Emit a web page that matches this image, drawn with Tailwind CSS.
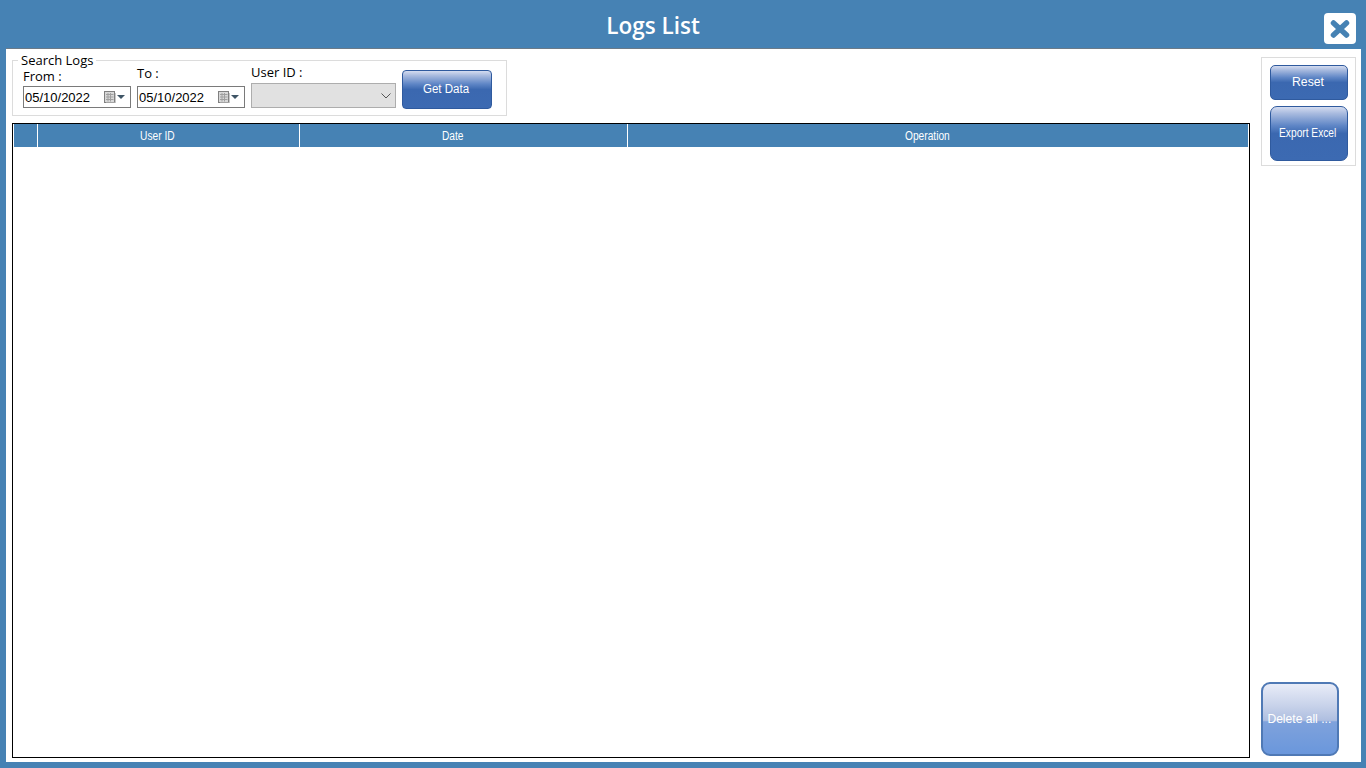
<!DOCTYPE html>
<html>
<head>
<meta charset="utf-8">
<script src="https://cdn.jsdelivr.net/npm/@tailwindcss/browser@4"></script>
</head>
<body class="m-0 w-[1366px] h-[768px] overflow-hidden bg-[#4682b4] font-['Liberation_Sans',sans-serif]">
<div class="flex flex-col h-[768px]">
  <header class="relative h-[49px] shrink-0 flex items-center justify-center">
    <h1 class="ml-[-60px] mt-[3px] text-[22.5px] leading-[32px] font-semibold text-white font-['Open_Sans',sans-serif]">Logs List</h1>
    <button class="absolute left-[1324px] top-[13px] w-[32px] h-[31px] bg-white rounded-[4px] flex items-center justify-center">
      <svg width="20" height="18" viewBox="0 0 20 18"><path d="M3.5 3 L16.5 15 M16.5 3 L3.5 15" stroke="#4682b4" stroke-width="5.5" fill="none" stroke-linecap="round"/></svg>
    </button>
    <div class="absolute left-[6px] top-[48px] w-[1307px] h-[1px] bg-[#6b7a88]"></div>
  </header>
  <main class="ml-[6px] mr-[5px] h-[713px] bg-white flex">
    <div class="w-[1245px] shrink-0 pl-[6px] flex flex-col">
      <section class="relative mt-[11px] w-[495px] h-[56px] border border-[#dcdcdc] flex">
        <span class="absolute left-[5px] top-[-9px] bg-white px-[3px] text-[13px] leading-[16px] text-black font-['Open_Sans',sans-serif]">Search Logs</span>
        <div class="ml-[10px] mt-[7px] w-[108px] flex flex-col">
          <label class="h-[18px] text-[13px] leading-[16px] font-medium text-black font-['Open_Sans',sans-serif]">From :</label>
          <div class="h-[22px] border border-[#7a7a7a] flex items-center pl-[1px] pr-[5px] text-[13px] text-black">
            <span class="flex-1 mt-[1px]">05/10/2022</span>
            <svg width="12" height="12" viewBox="0 0 12 12"><rect x="0.5" y="0.5" width="10" height="11" fill="#d8d8d8" stroke="#808080"/><path d="M2 3.5H9.5M2 6H9.5M2 8.5H9.5M4 2V10.5M6.5 2V10.5" stroke="#a0a0a0" stroke-width="1"/><path d="M11.5 2V12H2" stroke="#c8c8c8" fill="none"/></svg>
            <svg class="ml-[1px]" width="8" height="4" viewBox="0 0 8 4"><path d="M0 0H8L4 4Z" fill="#3f5566"/></svg>
          </div>
        </div>
        <div class="ml-[6px] mt-[4px] w-[108px] flex flex-col">
          <label class="h-[21px] text-[13px] leading-[16px] font-medium text-black font-['Open_Sans',sans-serif]">To :</label>
          <div class="h-[22px] border border-[#7a7a7a] flex items-center pl-[1px] pr-[5px] text-[13px] text-black">
            <span class="flex-1 mt-[1px]">05/10/2022</span>
            <svg width="12" height="12" viewBox="0 0 12 12"><rect x="0.5" y="0.5" width="10" height="11" fill="#d8d8d8" stroke="#808080"/><path d="M2 3.5H9.5M2 6H9.5M2 8.5H9.5M4 2V10.5M6.5 2V10.5" stroke="#a0a0a0" stroke-width="1"/><path d="M11.5 2V12H2" stroke="#c8c8c8" fill="none"/></svg>
            <svg class="ml-[1px]" width="8" height="4" viewBox="0 0 8 4"><path d="M0 0H8L4 4Z" fill="#3f5566"/></svg>
          </div>
        </div>
        <div class="ml-[6px] mt-[3px] w-[145px] flex flex-col">
          <label class="h-[19px] text-[13px] leading-[16px] font-medium text-black font-['Open_Sans',sans-serif]">User ID :</label>
          <div class="h-[25px] bg-[#e1e1e1] border border-[#adadad] flex items-center justify-end pr-[4px]">
            <svg width="10" height="6" viewBox="0 0 10 6"><path d="M0.5 0.5L5 5L9.5 0.5" stroke="#555" fill="none"/></svg>
          </div>
        </div>
        <button class="ml-[6px] mt-[9px] w-[90px] h-[39px] rounded-[4px] border border-[#2f5a9e] text-white text-[12px] pr-[2px] bg-[linear-gradient(#d4dcf0_0%,#a9bbdf_12%,#5f86c6_35%,#3b68b0_50%,#3c6ab2_100%)]"><span class="inline-block scale-x-[0.96] relative top-[-1px]">Get Data</span></button>
      </section>
      <section class="mt-[7px] w-[1238px] h-[635px] border border-black px-[1px]">
        <div class="grid grid-cols-[23px_262px_328px_1fr] h-[23px] bg-[#4682b4] text-white text-[12px] leading-[25px] text-center">
          <div></div>
          <div class="border-l border-white pr-[22px]"><span class="inline-block scale-x-[0.85]">User ID</span></div>
          <div class="border-l border-white pr-[21px]"><span class="inline-block scale-x-[0.85]">Date</span></div>
          <div class="border-l border-white pr-[21px]"><span class="inline-block scale-x-[0.85]">Operation</span></div>
        </div>
      </section>
    </div>
    <aside class="w-[110px] flex flex-col pl-[10px]">
      <div class="mt-[8px] w-[95px] h-[109px] border border-[#dcdcdc] pl-[8px] pt-[7px] flex flex-col gap-[6px]">
        <button class="w-[78px] h-[35px] rounded-[5px] border border-[#2f5a9e] text-white text-[13px] pb-[1px] pr-[2px] bg-[linear-gradient(#d4dcf0_0%,#a9bbdf_12%,#5f86c6_35%,#3b68b0_50%,#3c6ab2_100%)]"><span class="inline-block scale-x-[0.94]">Reset</span></button>
        <button class="w-[78px] h-[55px] rounded-[7px] border border-[#2f5a9e] text-white text-[12px] pb-[2px] pr-[3px] bg-[linear-gradient(#d4dcf0_0%,#a9bbdf_12%,#5f86c6_35%,#3b68b0_50%,#3c6ab2_100%)]"><span class="inline-block scale-x-[0.85] whitespace-nowrap">Export Excel</span></button>
      </div>
      <button class="mt-auto mb-[6px] w-[78px] h-[74px] rounded-[9px] border-2 border-[#4f79b5] text-white text-[13px] whitespace-nowrap pr-[1px] bg-[linear-gradient(#e8ecf8_0%,#c9d3ea_30%,#aebee0_52%,#7fa2dc_54%,#6a97dc_100%)]"><span class="inline-block scale-x-[0.93]">Delete all ...</span></button>
    </aside>
  </main>
</div>
</body>
</html>
